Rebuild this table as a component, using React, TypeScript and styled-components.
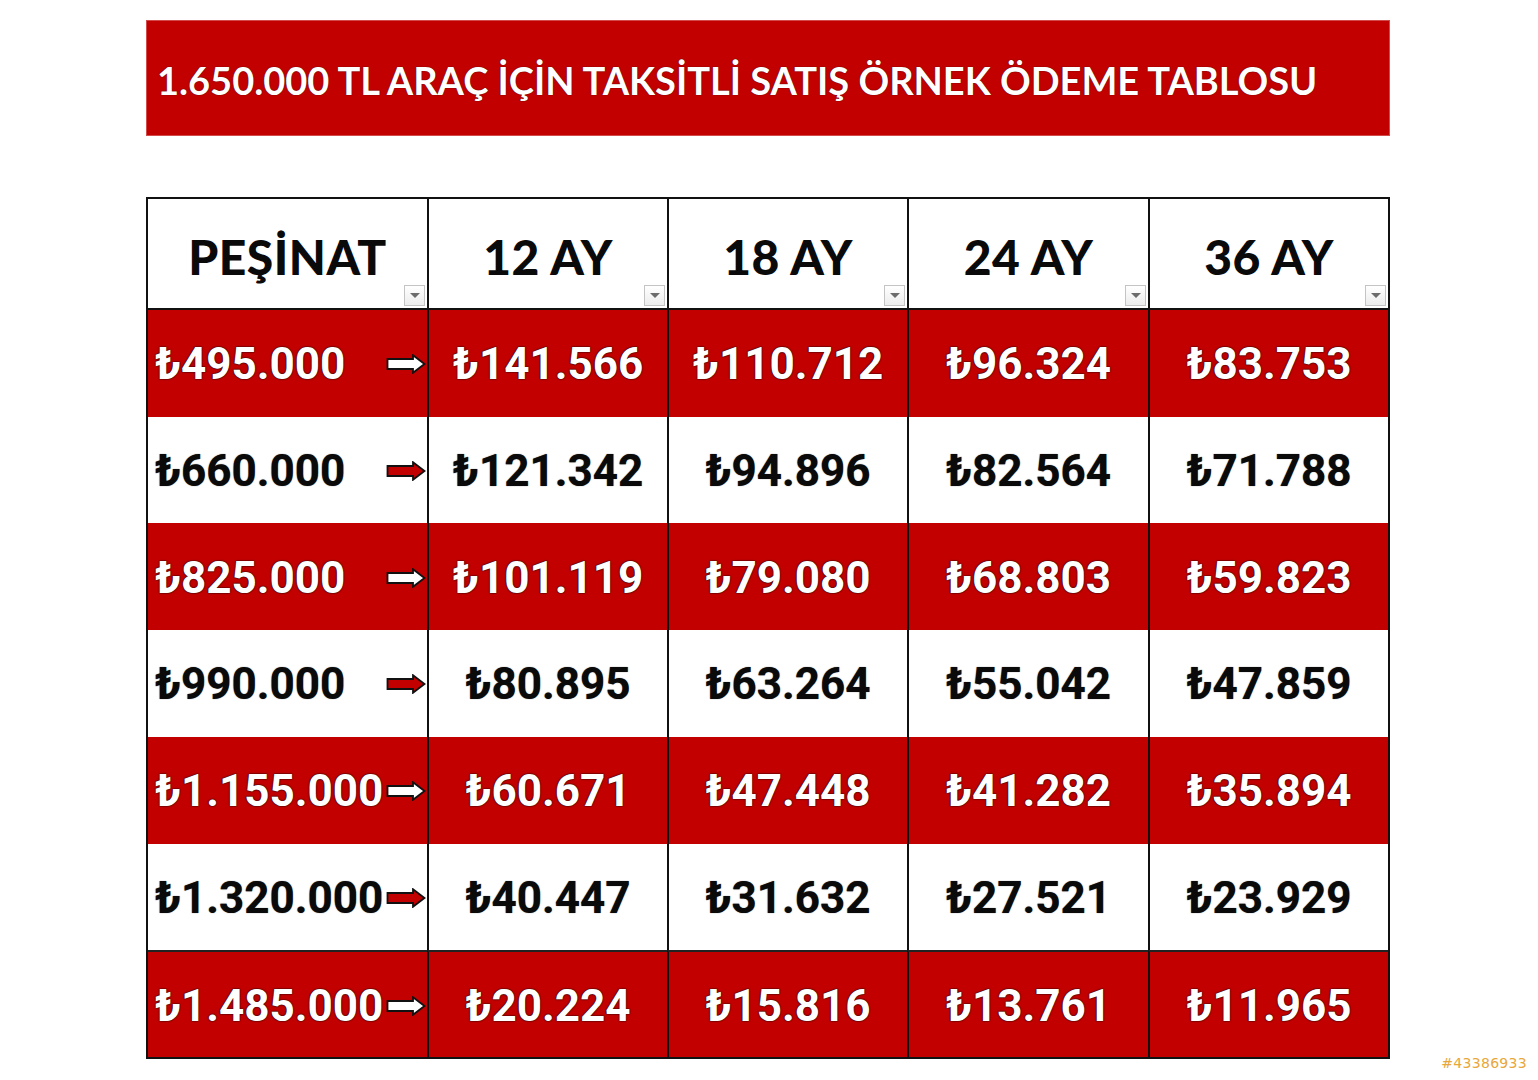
import React from "react";
import styled, { createGlobalStyle } from "styled-components";

const RED = "#c20000";

const Global = createGlobalStyle`
  html, body { margin: 0; padding: 0; background: #ffffff; }
  body { width: 1538px; height: 1080px; overflow: hidden; }
`;

const Page = styled.div`
  position: relative;
  width: 1538px;
  height: 1080px;
  padding: 20px 0 0 146px;
  box-sizing: border-box;
  display: flex;
  flex-direction: column;
  gap: 61px;
`;

const Banner = styled.div`
  width: 1244px;
  height: 116px;
  background: ${RED};
  box-sizing: border-box;
  padding: 3px 0 0 10px;
  display: flex;
  align-items: center;
  border: 1px solid #d24a4a;
`;

const BannerTitle = styled.h1`
  margin: 0;
  font-family: "Lato", "DejaVu Sans", sans-serif;
  font-weight: 700;
  font-size: 38px;
  color: #ffffff;
  letter-spacing: 0px;
  text-shadow: 0 0 1px #5a0000, 0 0 1px #5a0000;
  white-space: nowrap;
`;

const Table = styled.div`
  width: 1244px;
  height: 862px;
  box-sizing: border-box;
  border: 2px solid #111;
  display: grid;
  grid-template-columns: 279px 240px 240px 241px 240px;
  grid-template-rows: 111px repeat(7, 1fr);
`;

const HeaderCell = styled.div<{ $first?: boolean }>`
  position: relative;
  background: #ffffff;
  border-left: ${(p) => (p.$first ? "none" : "2px solid #111")};
  border-bottom: 2px solid #111;
  display: flex;
  align-items: center;
  justify-content: center;
  padding-top: 6px;
  box-sizing: border-box;
  font-family: "Lato", "DejaVu Sans", sans-serif;
  font-weight: 900;
  font-size: 48px;
  letter-spacing: 0.5px;
  color: #0a0a0a;
`;

const FilterButton = styled.span`
  position: absolute;
  right: 2px;
  bottom: 2px;
  width: 21px;
  height: 21px;
  box-sizing: border-box;
  border: 1px solid #c4c4c4;
  background: linear-gradient(#ffffff, #ececec);
  display: flex;
  align-items: center;
  justify-content: center;
  &::after {
    content: "";
    border-left: 5px solid transparent;
    border-right: 5px solid transparent;
    border-top: 5px solid #6b6b6b;
  }
`;

const Cell = styled.div<{ $red: boolean; $first?: boolean; $lineTop?: boolean }>`
  background: ${(p) => (p.$red ? RED : "#ffffff")};
  border-left: ${(p) => (p.$first ? "none" : "2px solid #111")};
  border-top: ${(p) => (p.$lineTop ? "2px solid #222" : "none")};
  box-sizing: border-box;
  overflow: hidden;
  display: flex;
  align-items: center;
  justify-content: ${(p) => (p.$first ? "space-between" : "center")};
  padding: ${(p) => (p.$first ? "2px 1px 0 7px" : "2px 0 0 0")};
  font-family: "Roboto", "DejaVu Sans", sans-serif;
  font-weight: 700;
  font-size: 44px;
  letter-spacing: 0px;
  color: ${(p) => (p.$red ? "#ffffff" : "#0a0a0a")};
  text-shadow: ${(p) =>
    p.$red
      ? "0 0 1px #300000, 0 0 1px #300000, 0 0 2px #300000"
      : "0 0 1px #555"};
  white-space: nowrap;
`;

const Watermark = styled.div`
  position: absolute;
  right: 11px;
  top: 1055px;
  font-family: "DejaVu Sans", "Noto Sans", sans-serif;
  font-size: 14px;
  color: #e8a73a;
  letter-spacing: 0.3px;
`;

const Arrow = ({ red }: { red: boolean }) => (
  <svg width="40" height="20" viewBox="0 0 40 20" style={{ flexShrink: 0 }}>
    <path
      d="M1.5 5 H27 V1.2 L38.5 10 L27 18.8 V15 H1.5 Z"
      fill={red ? "#ffffff" : RED}
      stroke="#111"
      strokeWidth="1.8"
      strokeLinejoin="miter"
    />
  </svg>
);

const headers = ["PEŞİNAT", "12 AY", "18 AY", "24 AY", "36 AY"];

const rows: string[][] = [
  ["₺495.000", "₺141.566", "₺110.712", "₺96.324", "₺83.753"],
  ["₺660.000", "₺121.342", "₺94.896", "₺82.564", "₺71.788"],
  ["₺825.000", "₺101.119", "₺79.080", "₺68.803", "₺59.823"],
  ["₺990.000", "₺80.895", "₺63.264", "₺55.042", "₺47.859"],
  ["₺1.155.000", "₺60.671", "₺47.448", "₺41.282", "₺35.894"],
  ["₺1.320.000", "₺40.447", "₺31.632", "₺27.521", "₺23.929"],
  ["₺1.485.000", "₺20.224", "₺15.816", "₺13.761", "₺11.965"],
];

export default function App() {
  return (
    <>
      <Global />
      <Page>
        <Banner>
          <BannerTitle>1.650.000 TL ARAÇ İÇİN TAKSİTLİ SATIŞ ÖRNEK ÖDEME TABLOSU</BannerTitle>
        </Banner>
        <Table>
          {headers.map((h, i) => (
            <HeaderCell key={h} $first={i === 0}>
              {h}
              <FilterButton />
            </HeaderCell>
          ))}
          {rows.map((r, ri) => {
            const red = ri % 2 === 0;
            return r.map((v, ci) => (
              <Cell key={`${ri}-${ci}`} $red={red} $first={ci === 0} $lineTop={ri === 6}>
                <span>{v}</span>
                {ci === 0 && <Arrow red={red} />}
              </Cell>
            ));
          })}
        </Table>
        <Watermark>#43386933</Watermark>
      </Page>
    </>
  );
}
